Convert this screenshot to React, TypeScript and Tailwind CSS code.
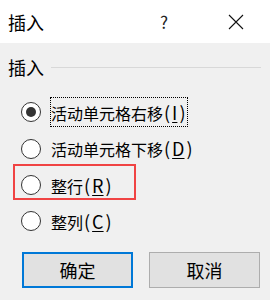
import React, { useState } from "react";

const FONT = { fontFamily: '"Microsoft YaHei", "Noto Sans CJK SC", "Noto Sans", sans-serif' };

type Opt = { id: string; label: string; key: string };

const OPTIONS: Opt[] = [
  { id: "right", label: "活动单元格右移", key: "I" },
  { id: "down", label: "活动单元格下移", key: "D" },
  { id: "row", label: "整行", key: "R" },
  { id: "col", label: "整列", key: "C" },
];

function Radio({ checked }: { checked: boolean }) {
  return (
    <span className="flex h-5 w-5 shrink-0 items-center justify-center rounded-full border border-[#333] bg-white">
      {checked && <span className="h-[10px] w-[10px] rounded-full bg-[#333]" />}
    </span>
  );
}

// "(X)" with the access key underlined; Latin glyphs run a bit larger than the CJK ones
function Label({ o }: { o: Opt }) {
  return (
    <span className="leading-6">
      {o.label}
      <span className="ml-px text-[18px]">
        (<span className="mx-[2px] underline underline-offset-2">{o.key}</span>)
      </span>
    </span>
  );
}

export default function App() {
  const [value, setValue] = useState("right");

  return (
    <div className="relative h-[300px] w-[270px] overflow-hidden bg-[#f0f0f0] text-black" style={FONT}>
      {/* title bar */}
      <div className="flex h-[43px] items-center bg-white">
        <span className="pl-2 text-[18px] leading-6">插入</span>
        <span className="ml-auto mr-[60px] text-[17px] leading-6 text-[#222]">?</span>
        <svg width="16" height="16" viewBox="0 0 16 16" className="mr-[26px]">
          <path d="M1 1 L15 15 M15 1 L1 15" stroke="#111" strokeWidth="1.1" fill="none" />
        </svg>
      </div>

      {/* group label */}
      <div className="mt-[12px] flex h-6 items-center">
        <span className="pl-2 text-[18px] leading-6">插入</span>
        <span className="ml-[7px] mr-[9px] h-px flex-1 bg-[#d8d8d8]" />
      </div>

      {/* options */}
      <div className="mt-[15px] flex flex-col">
        {OPTIONS.map((o, i) => (
          <div
            key={o.id}
            onClick={() => setValue(o.id)}
            className={`relative flex items-center pl-[21px] ${i === 1 ? "h-[37px]" : "h-9"}`}
          >
            <Radio checked={value === o.id} />
            {value === o.id ? (
              <span className="ml-[9px] inline-flex h-[30px] items-center border border-dotted border-black pr-[2px] text-[16px]">
                <Label o={o} />
              </span>
            ) : (
              <span className="ml-[10px] text-[16px]">
                <Label o={o} />
              </span>
            )}
            {o.id === "row" && (
              <span className="pointer-events-none absolute left-[13px] top-[-3px] h-[36px] w-[123px] border-2 border-[#f04343]" />
            )}
          </div>
        ))}
      </div>

      {/* buttons */}
      <div className="mt-[13px] flex pl-[22px]">
        <button className="h-9 w-[111px] border-2 border-[#0078d7] bg-[#e1e1e1] text-[18px]">确定</button>
        <button className="ml-[16px] h-9 w-[111px] border border-[#adadad] bg-[#e1e1e1] text-[18px]">取消</button>
      </div>
    </div>
  );
}
